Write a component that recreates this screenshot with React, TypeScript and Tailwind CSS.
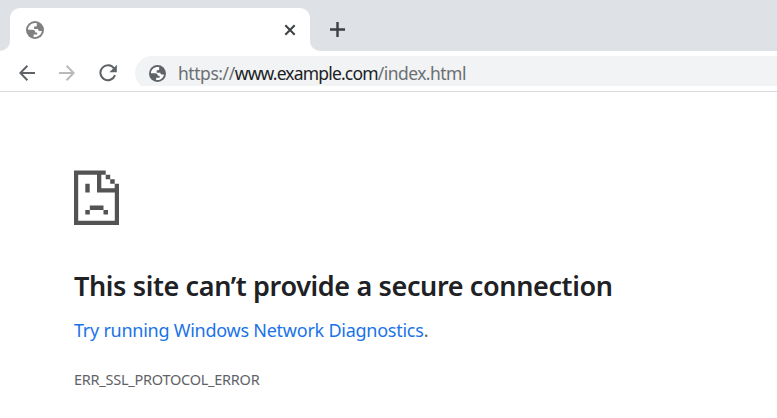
import { useState } from 'react';

function GlobeIcon({ className }: { className: string }) {
  return (
    <svg className={className} viewBox="0 0 18 18" fill="none">
      <circle cx="9" cy="9" r="9" fill="currentColor" />
      <path
        className="fill-white"
        d="M10.8 2.2C6.2 1.3 2.2 4.4 2 8.7h4.6c1.8 0 2.7 1 2.7 2.7h1.9v2.2H7.6v2.3c4 .7 7.6-1.9 8.3-5.9h-2.2c-1.2 0-1.6-.7-1.7-1.9H8.1V5.6h1.6c.7 0 1.1-.4 1.1-1.1z"
      />
    </svg>
  );
}

function SadFileIcon() {
  return (
    <svg className="h-[55px] w-[45px]" viewBox="0 0 45 55" fill="#535353">
      <path
        fillRule="evenodd"
        d="M0 .4h31.7v4.4h4.5v4.5h4.5v4.5H45V55H0zM4.2 4.8v46h36.6V22.6H23V4.8zM27.3 4.8v13.4h13.4v-4.4h-4.5V9.3h-4.5V4.8z"
      />
      <path d="M11.3 13.8h4.4v8.8h-4.4zM15.8 35.6h13.7v4.5H15.8zM11.3 40.1h4.5v4.4h-4.5zM29.5 40.1h4.5v4.4h-4.5z" />
    </svg>
  );
}

export default function App() {
  const [url] = useState({ scheme: 'https://', host: 'www.example.com', path: '/index.html' });

  return (
    <div className="h-[418px] w-[777px] overflow-hidden bg-white font-['Noto_Sans',sans-serif]">
      <header>
        <div className="flex h-[51px] items-end bg-[#dee1e6]">
          <div className="h-[10px] w-[10px] bg-white">
            <div className="h-full w-full rounded-br-[10px] bg-[#dee1e6]" />
          </div>
          <div className="flex h-[43px] w-[300px] items-center justify-between rounded-t-[10px] bg-white pr-[14px] pl-4">
            <GlobeIcon className="h-[18px] w-[18px] text-[#808080]" />
            <button type="button" aria-label="Close tab">
              <svg className="h-3 w-3" viewBox="0 0 12 12" stroke="#3c4043" strokeWidth="2">
                <path d="M1.3 1.3l9.4 9.4M10.7 1.3l-9.4 9.4" />
              </svg>
            </button>
          </div>
          <div className="h-[10px] w-[10px] bg-white">
            <div className="h-full w-full rounded-bl-[10px] bg-[#dee1e6]" />
          </div>
          <button type="button" aria-label="New tab" className="mb-[14px] ml-[10px]">
            <svg className="h-[15px] w-[15px]" viewBox="0 0 15 15" stroke="#3c4043" strokeWidth="2.4">
              <path d="M7.5 0v15M0 7.5h15" />
            </svg>
          </button>
        </div>
        <div className="flex h-[41px] items-start border-b border-[#d9dadc] pt-[5px] pl-[19px]">
          <div className="flex h-[34px] w-[116px] items-center gap-6 text-[#5f6368]">
            <svg className="h-4 w-4" viewBox="0 0 16 16" fill="none" stroke="currentColor" strokeWidth="2">
              <path d="M16 8H1.5M8.4.8L1.3 8l7.1 7.2" />
            </svg>
            <svg className="h-4 w-4 text-[#bababa]" viewBox="0 0 16 16" fill="none" stroke="currentColor" strokeWidth="2">
              <path d="M0 8h14.5M7.6.8L14.7 8l-7.1 7.2" />
            </svg>
            <svg className="h-[18px] w-[18px]" viewBox="0 0 18 18" fill="none" stroke="currentColor" strokeWidth="2">
              <path d="M15.1 4.5A7.5 7.5 0 1 0 16 11.2" />
              <path d="M17.8.8v7.4h-7.4z" fill="currentColor" stroke="none" />
            </svg>
          </div>
          <div className="h-[30px] flex-1 overflow-hidden">
            <div className="flex h-[34px] items-center rounded-l-full bg-[#f1f3f4] pl-[14px]">
              <GlobeIcon className="h-[17px] w-[17px] text-[#5f6368]" />
              <span className="ml-[12px] text-[17.5px] whitespace-nowrap text-[#6b6f73]">
                <span className="tracking-[-0.45px]">{url.scheme}</span>
                <span className="tracking-[-0.83px] text-[#202124]">{url.host}</span>
                <span className="tracking-[-0.53px]">{url.path}</span>
              </span>
            </div>
          </div>
        </div>
      </header>
      <main className="pt-[78px] pl-[74px]">
        <SadFileIcon />
        <h1 className="mt-[42px] text-[27px] leading-[38px] font-semibold tracking-[-0.37px] whitespace-nowrap text-[#202124]">
          This site can’t provide a secure connection
        </h1>
        <p className="mt-[12px] text-[18px] leading-[26px] tracking-[-0.25px] whitespace-nowrap text-[#5f6368]">
          <a href="#" className="text-[#1a73e8]">Try running Windows Network Diagnostics</a>.
        </p>
        <p className="mt-[25px] text-[14.5px] leading-[22px] tracking-[-0.25px] whitespace-nowrap text-[#5f6368]">
          ERR_SSL_PROTOCOL_ERROR
        </p>
      </main>
    </div>
  );
}
